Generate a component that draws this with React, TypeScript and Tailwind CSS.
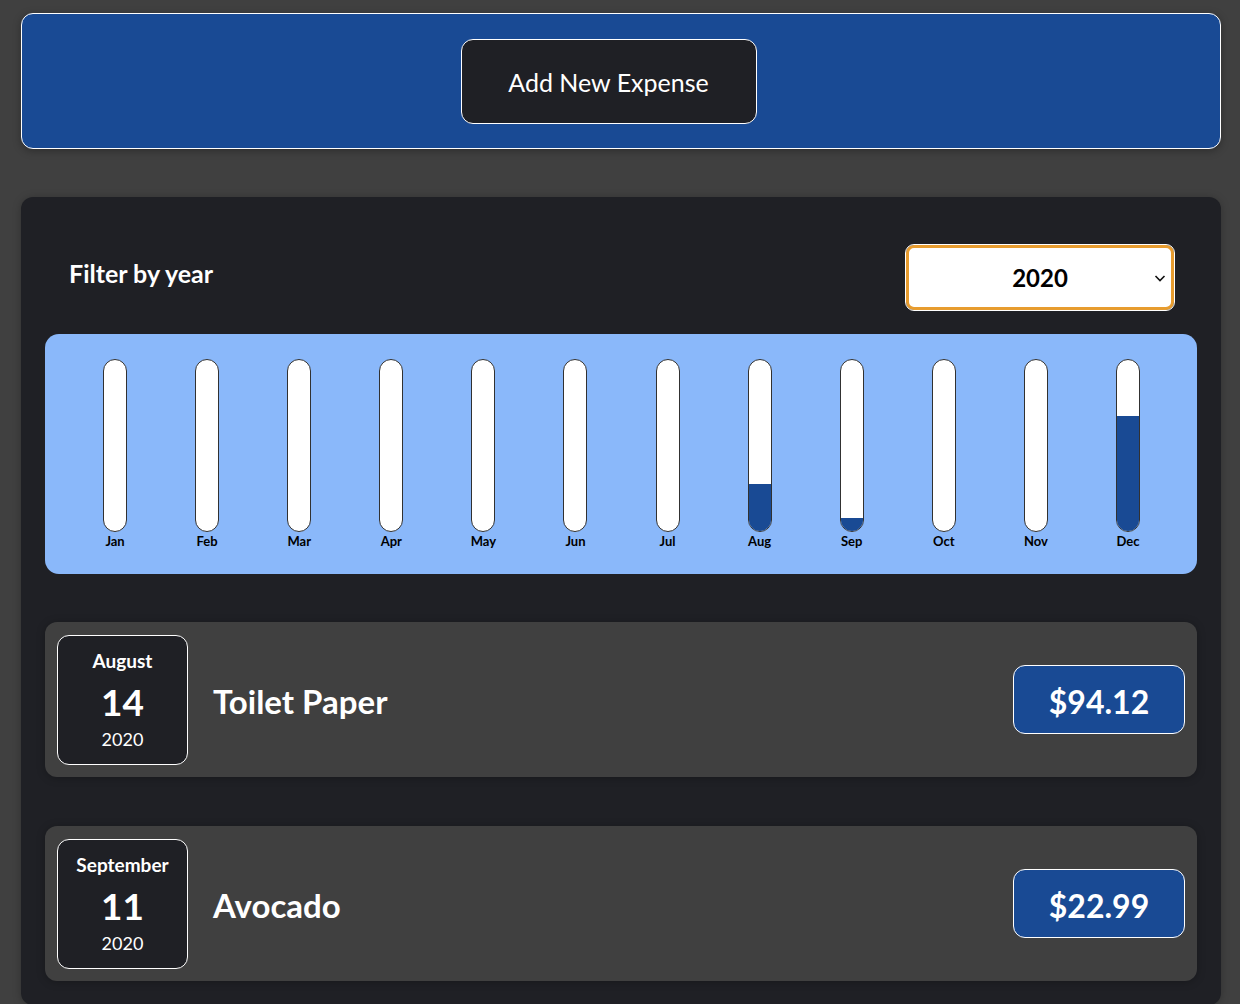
const months = [
  { label: "Jan", fill: 0 },
  { label: "Feb", fill: 0 },
  { label: "Mar", fill: 0 },
  { label: "Apr", fill: 0 },
  { label: "May", fill: 0 },
  { label: "Jun", fill: 0 },
  { label: "Jul", fill: 0 },
  { label: "Aug", fill: 27.5 },
  { label: "Sep", fill: 7.5 },
  { label: "Oct", fill: 0 },
  { label: "Nov", fill: 0 },
  { label: "Dec", fill: 67.5 },
]

const expenses = [
  { month: "August", day: "14", year: "2020", title: "Toilet Paper", amount: "$94.12" },
  { month: "September", day: "11", year: "2020", title: "Avocado", amount: "$22.99" },
]

type Expense = (typeof expenses)[number]

const ChartBar = ({ label, fill }: { label: string; fill: number }) => {
  return (
    <div className="flex flex-col items-center">
      <div className="flex flex-col justify-end w-[24px] h-[173px] bg-white border border-[#313131] rounded-[12px] overflow-hidden">
        <div className="bg-[#194a94] w-full" style={{ height: `${fill}%` }} />
      </div>
      <div className="text-[13px] font-bold text-black mt-[1px] leading-[16px]">{label}</div>
    </div>
  )
}

const ExpenseItem = ({ expense }: { expense: Expense }) => {
  return (
    <li className="flex items-center bg-[#404040] rounded-[12px] h-[155px] px-[12px] shadow-[0_1px_8px_rgba(0,0,0,0.25)]">
      <div className="flex flex-col items-center justify-center w-[131px] h-[130px] bg-[#1f2025] border border-white rounded-[12px] text-white">
        <div className="text-[19px] font-bold leading-[24px]">{expense.month}</div>
        <div className="text-[37px] font-bold leading-[44px] mt-[7px]">{expense.day}</div>
        <div className="text-[18px] leading-[24px] mt-[3px]">{expense.year}</div>
      </div>

      <h2 className="flex-1 text-white text-[33px] font-bold ml-[25px] pt-[4px]">{expense.title}</h2>

      <div className="flex items-center justify-center w-[172px] h-[69px] pt-[4px] bg-[#194a94] border border-white rounded-[12px] text-white text-[32px] font-bold">
        {expense.amount}
      </div>
    </li>
  )
}

const App = () => {
  return (
    <div className="min-h-screen bg-[#404040] pt-[13px] pl-[21px] pr-[19px] font-['Lato','Liberation_Sans',sans-serif]">
      <div className="flex justify-center items-center h-[136px] bg-[#194a94] border border-white rounded-[12px] shadow-[0_2px_8px_rgba(0,0,0,0.3)]">
        <button className="w-[296px] h-[85px] mr-[25px] pt-[3px] bg-[#1f2025] text-white text-[25px] border border-white rounded-[12px]">
          Add New Expense
        </button>
      </div>

      <div className="mt-[48px] bg-[#1f2025] rounded-[12px] p-[24px] shadow-[0_1px_8px_rgba(0,0,0,0.25)]">
        <div className="flex justify-between items-center p-[24px] pr-[23px]">
          <label className="text-white text-[25px] font-bold pb-[8px]">Filter by year</label>
          <div className="relative flex items-center justify-center w-[268px] h-[65px] bg-white border-[3px] border-[#e79c2f] rounded-[8px] outline outline-1 outline-white">
            <span className="text-black text-[24px] font-bold">2020</span>
            <svg className="absolute right-[4px]" width="14" height="14" viewBox="0 0 14 14" fill="none">
              <path d="M2.5 5 L7 9.5 L11.5 5" stroke="#111" strokeWidth="1.6" />
            </svg>
          </div>
        </div>

        <div className="grid grid-cols-12 justify-items-center bg-[#8ab8fa] rounded-[14px] h-[240px] pl-[24px] pr-[23px] pt-[25px]">
          {months.map((m) => (
            <ChartBar key={m.label} label={m.label} fill={m.fill} />
          ))}
        </div>

        <ul className="flex flex-col gap-[49px] mt-[48px]">
          {expenses.map((e) => (
            <ExpenseItem key={e.title} expense={e} />
          ))}
        </ul>
      </div>
    </div>
  )
}

export default App
